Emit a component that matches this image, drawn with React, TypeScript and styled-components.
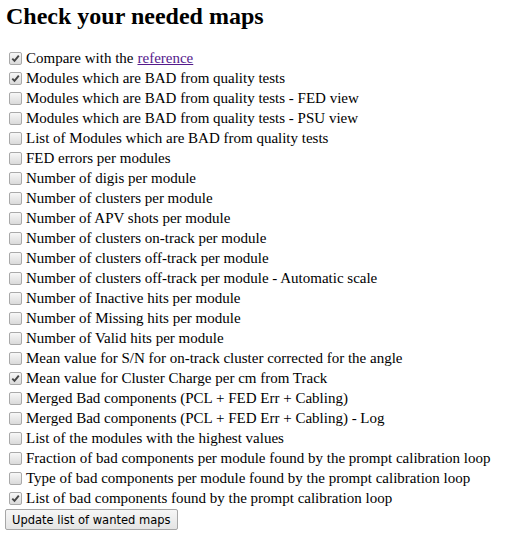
import React from "react";
import styled, { createGlobalStyle } from "styled-components";

const Global = createGlobalStyle`
  body {
    margin: 2px 5px 5px 5px;
    background: #ffffff;
    color: #000000;
    font-family: "Liberation Serif", serif;
  }
`;

const Title = styled.h2`
  font-family: "Liberation Serif", serif;
  font-weight: bold;
  font-size: 24px;
  line-height: 28px;
  margin: 0 0 18px 1px;
  white-space: nowrap;
`;

const List = styled.div`
  display: flex;
  flex-direction: column;
`;

const Row = styled.label`
  display: flex;
  align-items: center;
  height: 20px;
  font-size: 15px;
  white-space: nowrap;
`;

const Box = styled.span<{ $on: boolean }>`
  box-sizing: border-box;
  width: 13px;
  height: 13px;
  margin: 0 4px 0 4px;
  flex: none;
  border: 1px solid #a9a9a9;
  border-radius: 2px;
  background: linear-gradient(#f7f7f7, #dadada);
  display: flex;
  align-items: center;
  justify-content: center;
  svg {
    display: ${(p) => (p.$on ? "block" : "none")};
  }
`;

const Link = styled.a`
  color: #551a8b;
  text-decoration: underline;
  margin-left: 4px;
`;

const Button = styled.button`
  margin-top: 1px;
  align-self: flex-start;
  box-sizing: border-box;
  height: 21px;
  padding: 0 6px;
  white-space: nowrap;
  font-family: "DejaVu Sans Condensed", "DejaVu Sans", sans-serif;
  font-size: 12.8px;
  line-height: 16px;
  background: linear-gradient(#f6f6f6, #e4e4e4);
  border: 1px solid #a6a6a6;
  border-radius: 2px;
  color: #000;
`;

const Check = () => (
  <svg width="9" height="9" viewBox="0 0 9 9">
    <path d="M1.3 4.6 L3.5 6.9 L7.8 1.6" fill="none" stroke="#454545" strokeWidth="1.9" />
  </svg>
);

const items: [string, boolean][] = [
  ["Modules which are BAD from quality tests", true],
  ["Modules which are BAD from quality tests - FED view", false],
  ["Modules which are BAD from quality tests - PSU view", false],
  ["List of Modules which are BAD from quality tests", false],
  ["FED errors per modules", false],
  ["Number of digis per module", false],
  ["Number of clusters per module", false],
  ["Number of APV shots per module", false],
  ["Number of clusters on-track per module", false],
  ["Number of clusters off-track per module", false],
  ["Number of clusters off-track per module - Automatic scale", false],
  ["Number of Inactive hits per module", false],
  ["Number of Missing hits per module", false],
  ["Number of Valid hits per module", false],
  ["Mean value for S/N for on-track cluster corrected for the angle", false],
  ["Mean value for Cluster Charge per cm from Track", true],
  ["Merged Bad components (PCL + FED Err + Cabling)", false],
  ["Merged Bad components (PCL + FED Err + Cabling) - Log", false],
  ["List of the modules with the highest values", false],
  ["Fraction of bad components per module found by the prompt calibration loop", false],
  ["Type of bad components per module found by the prompt calibration loop", false],
  ["List of bad components found by the prompt calibration loop", true],
];

export default function App() {
  return (
    <>
      <Global />
      <Title>Check your needed maps</Title>
      <List>
        <Row>
          <Box $on={true}>
            <Check />
          </Box>
          Compare with the<Link href="#">reference</Link>
        </Row>
        {items.map(([t, c]) => (
          <Row key={t}>
            <Box $on={c}>
              <Check />
            </Box>
            {t}
          </Row>
        ))}
        <Button>Update list of wanted maps</Button>
      </List>
    </>
  );
}
